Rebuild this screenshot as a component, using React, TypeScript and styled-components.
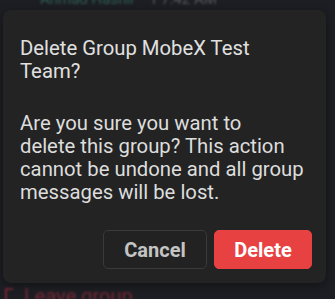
import React from "react";
import styled, { createGlobalStyle } from "styled-components";

const Global = createGlobalStyle`
  html, body { margin: 0; padding: 0; background: #1c1d22; }
  * { box-sizing: border-box; }
`;

const Screen = styled.div`
  position: relative;
  width: 335px;
  height: 299px;
  overflow: hidden;
  background: #1d1e23;
  font-family: Roboto, "Noto Sans", sans-serif;
`;

const PageContent = styled.div`
  display: flex;
  flex-direction: column;
  justify-content: space-between;
  height: 100%;
  filter: blur(1px);
  opacity: 0.5;
`;

const TopRow = styled.div`
  display: flex;
  gap: 14px;
  margin-top: -10px;
  padding-left: 40px;
  font-size: 15px;
  color: #3e9a7c;
`;

const Muted = styled.span`
  color: #8c8c8c;
`;

const LeaveRow = styled.div`
  display: flex;
  align-items: center;
  gap: 4px;
  padding-left: 4px;
  margin-bottom: -9px;
  font-size: 20px;
  color: #c8334a;
`;

const Overlay = styled.div`
  position: absolute;
  left: 3px;
  top: 10px;
  width: 323px;
  height: 273px;
`;

const Dialog = styled.div`
  display: flex;
  flex-direction: column;
  height: 100%;
  padding: 27px 14px 14px 17px;
  background: #232323;
  border-radius: 8px;
  box-shadow: 0 2px 10px rgba(0, 0, 0, 0.4);
`;

const Title = styled.h2`
  margin: 0;
  font-size: 20.3px;
  line-height: 23px;
  font-weight: 400;
  color: #e0e0e0;
`;

const Body = styled.p`
  margin: 29px 0 0;
  font-size: 20.3px;
  line-height: 23px;
  font-weight: 400;
  color: #dddddd;
`;

const Actions = styled.div`
  display: flex;
  justify-content: flex-end;
  gap: 7px;
  margin-top: auto;
`;

const Button = styled.button<{ $danger?: boolean }>`
  height: 39px;
  width: ${(p) => (p.$danger ? "98px" : "104px")};
  border-radius: 5px;
  border: 1px solid ${(p) => (p.$danger ? "#e84142" : "#3a3a3a")};
  background: ${(p) => (p.$danger ? "#e84142" : "#222222")};
  color: ${(p) => (p.$danger ? "#ffffff" : "#c4c4c4")};
  font-family: Roboto, "Noto Sans", sans-serif;
  font-size: 20px;
  font-weight: 700;
  padding: 0;
  cursor: pointer;
`;

export default function App() {
  return (
    <>
      <Global />
      <Screen>
        <PageContent>
          <TopRow>
            <span>Ahmad Hashir</span>
            <Muted>1 7:42 AM</Muted>
          </TopRow>
          <LeaveRow>
            <svg width="16" height="18" viewBox="0 0 16 18" fill="none" stroke="#c8334a" strokeWidth="2">
              <path d="M9 2H2v14h7" />
            </svg>
            <span>Leave group</span>
          </LeaveRow>
        </PageContent>
        <Overlay>
          <Dialog>
            <Title>
              Delete Group MobeX Test
              <br />
              Team?
            </Title>
            <Body>
              Are you sure you want to
              <br />
              delete this group? This action
              <br />
              cannot be undone and all group
              <br />
              messages will be lost.
            </Body>
            <Actions>
              <Button>Cancel</Button>
              <Button $danger>Delete</Button>
            </Actions>
          </Dialog>
        </Overlay>
      </Screen>
    </>
  );
}
